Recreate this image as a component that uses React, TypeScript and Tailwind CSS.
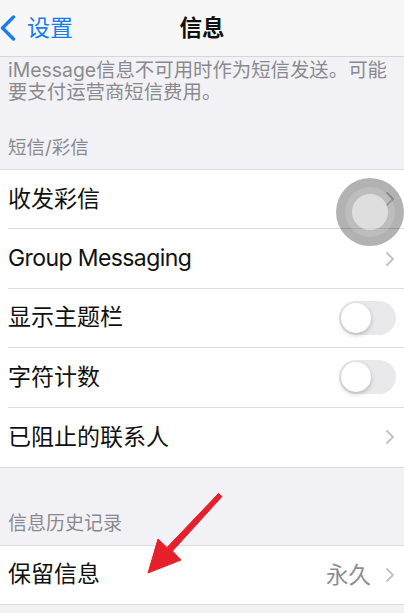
import React from 'react';

const font = { fontFamily: '"Inter", "Noto Sans CJK SC", sans-serif' };

function Chevron() {
  return (
    <svg width="10" height="16" viewBox="0 0 10 16" className="shrink-0">
      <polyline points="2,2 8,8 2,14" fill="none" stroke="#c4c4c7" strokeWidth="2" strokeLinecap="round" strokeLinejoin="round" />
    </svg>
  );
}

function Toggle() {
  return (
    <div className="relative w-[57px] h-[34px] rounded-full bg-[#e9e9eb]">
      <div className="absolute left-[2px] top-[2px] w-[30px] h-[30px] rounded-full bg-white shadow-[0_2px_5px_rgba(0,0,0,0.22)]" />
    </div>
  );
}

type Row = { label: string; right: 'chevron' | 'toggle'; value?: string; latin?: boolean };

function Group({ rows }: { rows: Row[] }) {
  return (
    <div className="bg-white border-y border-[#dcdcdf]">
      {rows.map((r, i) => (
        <div key={r.label} className="pl-[8px] h-[59.4px] flex">
          <div
            className={`flex-1 flex items-center justify-between pr-[8px] ${
              i < rows.length - 1 ? 'border-b border-[#dcdcdf]' : ''
            }`}
          >
            <span className={`text-[23px] text-[#111] leading-none ${r.latin ? 'tracking-[-0.6px]' : ''}`}>
              {r.label}
            </span>
            {r.right === 'toggle' ? (
              <Toggle />
            ) : (
              <div className="flex items-center gap-[14px] pr-[1px]">
                {r.value && <span className="text-[22.5px] text-[#8e8e93] leading-none">{r.value}</span>}
                <Chevron />
              </div>
            )}
          </div>
        </div>
      ))}
    </div>
  );
}

export default function App() {
  return (
    <div className="relative w-[404px] h-[613px] overflow-hidden bg-[#f2f2f6]" style={font}>
      {/* nav bar */}
      <div className="h-[57px] bg-[#f7f7f8] border-b border-[#d6d6d9] flex items-center relative">
        <div className="flex items-center gap-[11px] text-[#1a7cf1]">
          <svg width="16" height="26" viewBox="0 0 16 26">
            <polyline points="13.5,2 2.5,13 13.5,24" fill="none" stroke="#1a7cf1" strokeWidth="3.4" strokeLinecap="round" strokeLinejoin="round" />
          </svg>
          <span className="text-[23px] leading-none">设置</span>
        </div>
        <div className="absolute inset-x-0 top-0 h-[57px] flex items-center justify-center pointer-events-none">
          <span className="text-[22.5px] font-bold text-[#111] leading-none">信息</span>
        </div>
      </div>

      <div className="px-[8px] pt-[2px] text-[19.4px] leading-[22px] text-[#8a8a8e]">
        <p>iMessage信息不可用时作为短信发送。可能</p>
        <p>要支付运营商短信费用。</p>
      </div>

      <div className="px-[8px] pt-[33px] pb-[11px] text-[18.5px] leading-[22px] text-[#8a8a8e]">短信/彩信</div>

      <Group
        rows={[
          { label: '收发彩信', right: 'chevron' },
          { label: 'Group Messaging', right: 'chevron', latin: true },
          { label: '显示主题栏', right: 'toggle' },
          { label: '字符计数', right: 'toggle' },
          { label: '已阻止的联系人', right: 'chevron' },
        ]}
      />

      <div className="px-[8px] pt-[45px] pb-[10px] text-[19px] leading-[22px] text-[#8a8a8e]">信息历史记录</div>

      <div className="[&>div>div]:h-[58px]">
        <Group rows={[{ label: '保留信息', right: 'chevron', value: '永久' }]} />
      </div>

      {/* assistive touch */}
      <div className="absolute left-[336px] top-[178px] w-[68px] h-[68px] rounded-full bg-black/30 flex items-center justify-center">
        <div className="w-[50px] h-[50px] rounded-full bg-white/15 flex items-center justify-center">
          <div className="w-[36px] h-[36px] rounded-full bg-white/50" />
        </div>
      </div>

      {/* red annotation arrow */}
      <svg className="absolute left-0 top-0 pointer-events-none" width="404" height="613">
        <polygon
          points="218.5,493.5 222,496.5 172.5,551 181,560 148,573 158,539 167,547.5"
          fill="#e6202a"
          stroke="#e6202a"
          strokeWidth="1"
          strokeLinejoin="round"
        />
      </svg>
    </div>
  );
}
